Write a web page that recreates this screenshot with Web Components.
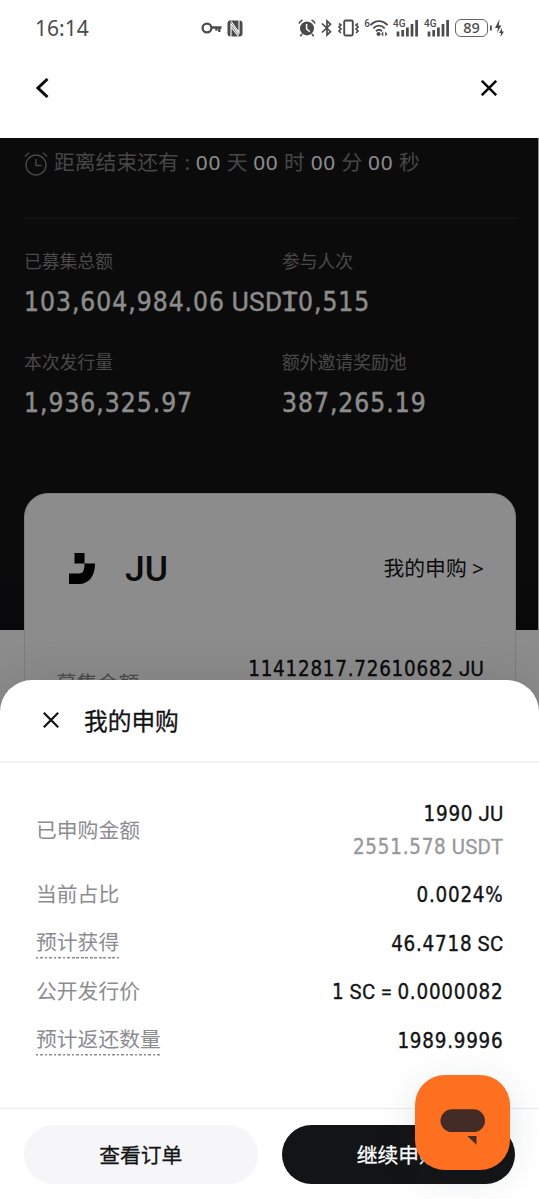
<!DOCTYPE html>
<html lang="zh-CN">
<head>
<meta charset="utf-8">
<title>我的申购</title>
<style>
    body {
        margin: 0;
        background: #fff;
        color: #131415;
        font-family: 'Noto Sans', 'Noto Sans CJK SC', sans-serif;
    }
</style>
</head>
<body>
<app-screen>
    <status-bar slot="top" time="16:14" battery="89"></status-bar>
    <nav-bar slot="top"></nav-bar>

    <launch-hero>
        <count-down></count-down>
        <hero-stat label="已募集总额"><amount-text value="103,604,984.06 USDT"></amount-text></hero-stat>
        <hero-stat label="参与人次"><amount-text value="10,515"></amount-text></hero-stat>
        <hero-stat label="本次发行量"><amount-text value="1,936,325.97"></amount-text></hero-stat>
        <hero-stat label="额外邀请奖励池"><amount-text value="387,265.19"></amount-text></hero-stat>
    </launch-hero>
    <token-card symbol="JU" action="我的申购 &gt;">
        <span slot="label">募集金额</span>
        <amount-text slot="value" value="11412817.72610682 JU"></amount-text>
    </token-card>

    <bottom-sheet slot="sheet" heading="我的申购">
        <info-row class="tall" label="已申购金额">
            <amount-text value="1990 JU"></amount-text>
            <amount-text class="muted" value="2551.578 USDT"></amount-text>
        </info-row>
        <info-row label="当前占比"><amount-text value="0.0024%"></amount-text></info-row>
        <info-row label="预计获得" hint><amount-text value="46.4718 SC"></amount-text></info-row>
        <info-row label="公开发行价"><amount-text value="1 SC = 0.0000082"></amount-text></info-row>
        <info-row label="预计返还数量" hint><amount-text value="1989.9996"></amount-text></info-row>
        <pill-button slot="actions">查看订单</pill-button>
        <pill-button slot="actions" primary>继续申购</pill-button>
    </bottom-sheet>
    <chat-bubble slot="sheet"></chat-bubble>
</app-screen>

<script>
class BaseElement extends HTMLElement {
    connectedCallback() {
        if (this.shadowRoot) return;
        this.attachShadow({ mode: 'open' });
        this.shadowRoot.innerHTML = this.render();
    }
    attr(name) {
        return (this.getAttribute(name) || '').replace(/</g, '&lt;').replace(/>/g, '&gt;');
    }
}

class AppScreen extends BaseElement {
    render() {
        return `
            <style>
                :host {
                    display: flex;
                    flex-direction: column;
                    position: relative;
                    height: 1199px;
                    overflow: hidden;
                }
                .page {
                    flex: 1;
                    position: relative;
                    overflow: hidden;
                    background: #fff;
                }
                .mask {
                    position: absolute;
                    inset: 0;
                    background: rgba(0, 0, 0, 0.45);
                }
            </style>
            <slot name="top"></slot>
            <div class="page">
                <slot></slot>
                <div class="mask"></div>
            </div>
            <slot name="sheet"></slot>
        `;
    }
}

class StatusBar extends BaseElement {
    render() {
        const signal = `
            <div class="signal"><b>4G</b><svg width="26" height="18" viewBox="0 0 26 18"><path d="M5 12.5V17.500M9.700 11V17.500M14.400 8.500V17.500M19 5V17.500M23.600 1V17.500" stroke-width="2.700"/></svg></div>
        `;
        return `
            <style>
                :host {
                    display: flex;
                    align-items: center;
                    height: 56px;
                    padding: 0 35px;
                    box-sizing: border-box;
                    color: #4b4b4b;
                }
                .time { font-size: 21px; width: 166px; }
                svg { display: block; fill: none; stroke: currentColor; }
                .solid { fill: currentColor; stroke: none; }
                .left { display: flex; gap: 5px; align-items: center; flex: 1; }
                .right { display: flex; align-items: center; }
                .net {
                    display: flex;
                    align-items: flex-start;
                    font: 500 10px/10px Roboto, sans-serif;
                }
                .signal { width: 31px; position: relative; height: 18px; }
                .signal b {
                    position: absolute;
                    left: 0;
                    top: 0;
                    font: 500 10px/9px Roboto, sans-serif;
                }
                .battery {
                    border: 1.5px solid #666;
                    border-radius: 6px;
                    box-sizing: border-box;
                    width: 33px;
                    height: 18px;
                    text-align: center;
                    font: 500 14.500px/15px 'Noto Sans', sans-serif;
                }
            </style>
            <span class="time">${this.attr('time')}</span>
            <div class="left">
                <svg width="21" height="14" viewBox="0 0 21 14"><circle cx="6" cy="7" r="4.4" stroke-width="2.3"/><path d="M10.5 6.5H20.500M18.3 6v5M15.4 6v3.7" stroke-width="2.3"/></svg>
                <svg width="16" height="17" viewBox="0 0 16 17"><path class="solid" d="M3.5.5h9A3 3 0 0 1 15.500 3.500v10a3 3 0 0 1-3 3h-9a3 3 0 0 1-3-3v-10a3 3 0 0 1 3-3z"/><path d="M4 17V4L11.800 14.500M12 0V12.500L4.200 1.500M4.500 7.500l7 9" stroke="#fff" stroke-width="1.100"/></svg>
            </div>
            <div class="right">
                <svg width="18" height="18" viewBox="0 0 18 18"><circle class="solid" cx="9" cy="9.400" r="7"/><path d="M1 4.600C1.500 3 2.800 1.700 4.500 1M17 4.600C16.500 3 15.200 1.700 13.500 1M4 15l-1.700 2.200M14 15l1.700 2.200" stroke-width="1.600"/><path d="M8.600 5v5l3.200 2.600" stroke="#fff" stroke-width="1.500"/></svg>
                <svg style="margin-left:5px" width="12" height="18" viewBox="0 0 12 18"><path d="M1 4.500l8.500 8.200L6 16V2l3.500 3.300L1 13.500" stroke-width="1.700"/></svg>
                <svg style="margin-left:5px" width="21" height="18" viewBox="0 0 21 18"><rect x="6.200" y="1.500" width="8.600" height="15" rx="1.500" stroke-width="1.900"/><path d="M1 4.500l2 1.500-2 2 2 2-2 2 2 2M20 4.500L18 6l2 2-2 2 2 2-2 2" stroke-width="1.600"/></svg>
                <div class="net" style="margin-left:5px">6
                    <svg width="18" height="18" viewBox="0 0 18 18"><path d="M.5 6.200c5-5.500 12-5.500 17 0M3.300 9.300c3.500-3.600 8-3.600 11.400 0M6 12.200c2-1.800 4-1.800 6 0" stroke-width="1.900"/><circle class="solid" cx="8.500" cy="15" r="2"/><path class="solid" d="M11 15l2.300-2.500v5zM17.500 15l-2.300-2.500v5z"/></svg>
                </div>
                <div style="display:flex;margin-left:5px">${signal}${signal}</div>
                <div class="battery">${this.attr('battery')}</div>
                <svg style="margin-left:2px" width="14" height="18" viewBox="0 0 14 18"><path class="solid" d="M0 6.500h1.800v5H0zM9.500 0L5 9H8l-1 5 4.500-7.500H8.800zM12 9l-3 5H11L10.500 18 14 12.500H12z"/></svg>
            </div>
        `;
    }
}

class NavBar extends BaseElement {
    render() {
        return `
            <style>
                :host {
                    display: flex;
                    justify-content: space-between;
                    align-items: center;
                    height: 82px;
                    padding: 0 42px 19px 36px;
                    box-sizing: border-box;
                }
                svg { display: block; fill: none; stroke: #0b0b0b; stroke-width: 2.500; }
            </style>
            <svg width="13" height="20" viewBox="0 0 13 20"><path d="M11.500 1L2 10l9.500 9" stroke-width="3"/></svg>
            <svg width="16" height="16" viewBox="0 0 16 16"><path d="M.8.800l14.400 14.400M15.200.800L.8 15.200"/></svg>
        `;
    }
}

class AmountText extends BaseElement {
    render() {
        const text = this.attr('value').replace(/[A-Z=]+/g, '<span>$&</span>');
        return `
            <style>
                :host {
                    display: block;
                    white-space: nowrap;
                    font: 400 1em/20px 'DejaVu Sans Condensed', 'DejaVu Sans', sans-serif;
                    font-stretch: semi-condensed;
                    font-size: 0.98em;
                    letter-spacing: 0.038em;
                    word-spacing: -0.07em;
                    -webkit-text-stroke: 0.35px currentColor;
                }
                span {
                    font-family: Roboto, sans-serif;
                    font-stretch: normal;
                    letter-spacing: 0.015em;
                    -webkit-text-stroke: 0.3px currentColor;
                }
            </style>
            ${text}
        `;
    }
}

class CountDown extends BaseElement {
    render() {
        const parts = ['天', '时', '分', '秒'].map(u => `<b>00</b> ${u}`).join(' ');
        return `
            <style>
                :host {
                    display: flex;
                    align-items: center;
                    gap: 6px;
                    grid-column: 1 / -1;
                    height: 81px;
                    padding-bottom: 33px;
                    box-sizing: border-box;
                    border-bottom: 2px solid #202122;
                    color: #818181;
                    font-size: 20.8px;
                }
                svg { fill: none; stroke: currentColor; stroke-width: 1.400; position: relative; top: 2px; }
                span { word-spacing: 0.300px; }
                b { font-weight: 400; color: #fff; letter-spacing: 0.7px; }
            </style>
            <svg width="24" height="25" viewBox="0 0 24 25"><circle cx="12" cy="14" r="10"/><path d="M12 8v6.500h5.500M.800 5.500L5 1.800M23.200 5.500L19 1.800"/></svg>
            <span>距离结束还有 : ${parts}</span>
        `;
    }
}

class LaunchHero extends BaseElement {
    render() {
        return `
            <style>
                :host {
                    display: grid;
                    grid-template-columns: 234px 234px;
                    column-gap: 24px;
                    align-content: start;
                    height: 492px;
                    margin-right: 1px;
                    padding: 0 22px 0 24px;
                    box-sizing: border-box;
                    background: linear-gradient(#151515 75%, #121216);
                }
            </style>
            <slot></slot>
        `;
    }
}

class HeroStat extends BaseElement {
    render() {
        return `
            <style>
                :host { display: block; height: 73px; padding-top: 28.500px; }
                .label { font-size: 17.8px; line-height: 26px; color: #858585; }
                .value { font-size: 26.700px; color: #fff; padding-top: 18px; }
            </style>
            <div class="label">${this.attr('label')}</div>
            <div class="value"><slot></slot></div>
        `;
    }
}

class TokenCard extends BaseElement {
    render() {
        return `
            <style>
                :host {
                    display: block;
                    position: relative;
                    margin: -137px 23px 0 24px;
                    height: 360px;
                    padding: 0 31px;
                    box-sizing: border-box;
                    border: 1px solid #e4e4e4;
                    border-radius: 24px;
                    background: #fff;
                    font-size: 20.800px;
                }
                .head { display: flex; align-items: center; height: 148px; }
                .action { padding-bottom: 2px; }
                svg { margin: 0 30px 0 13px; }
                .symbol { flex: 1; font: 500 35.500px/1 Roboto, sans-serif; padding-top: 3px; }
                .row { display: flex; justify-content: space-between; padding-top: 17px; }
                .label { color: #8b8b8b; line-height: 49px; }
            </style>
            <div class="head">
                <svg width="26" height="31" viewBox="0 0 26 31"><path d="M5.500 0h10v10.500H26C26 23 20 31 10 31H0V20.500h10c4 0 5.500-3 5.500-10h-10z"/></svg>
                <span class="symbol">${this.attr('symbol')}</span>
                <span class="action">${this.attr('action')}</span>
            </div>
            <div class="row"><div class="label"><slot name="label"></slot></div><div><slot name="value"></slot></div></div>
        `;
    }
}

class BottomSheet extends BaseElement {
    render() {
        return `
            <style>
                :host {
                    position: absolute;
                    left: 0;
                    right: 0;
                    bottom: 0;
                    height: 519px;
                    display: flex;
                    flex-direction: column;
                    background: #fff;
                    border-radius: 32px 32px 0 0;
                    box-shadow: 0 0 45px rgba(0, 0, 0, 0.12);
                }
                header {
                    display: flex;
                    align-items: center;
                    gap: 25px;
                    height: 83px;
                    padding: 0 0 2px 43px;
                    box-sizing: border-box;
                    border-bottom: 2px solid #f3f3f3;
                    font-size: 23.700px;
                }
                svg { fill: none; stroke: #131415; stroke-width: 2.200; }
                h2 { margin: 0; font-size: 1em; font-weight: 400; -webkit-text-stroke: 0.300px; }
                main { flex: 1; padding: 28px 35.500px 0 36px; }
                footer {
                    display: grid;
                    grid-template-columns: 1fr 1fr;
                    gap: 24px;
                    height: 91px;
                    padding: 16px 24px 15px;
                    box-sizing: border-box;
                    border-top: 1px solid #ebebeb;
                }
            </style>
            <header>
                <svg width="16" height="16" viewBox="0 0 16 16"><path d="M.8.800l14.400 14.400M15.200.800L.8 15.200"/></svg>
                <h2>${this.attr('heading')}</h2>
            </header>
            <main><slot></slot></main>
            <footer><slot name="actions"></slot></footer>
        `;
    }
}

class InfoRow extends BaseElement {
    render() {
        return `
            <style>
                :host {
                    display: flex;
                    justify-content: space-between;
                    align-items: center;
                    height: 48.500px;
                    font-size: 20.800px;
                }
                :host(.tall) { height: 80px; }
                .label { color: #8c8c90; line-height: 29px; margin-top: -2px; }
                :host([hint]) .label {
                    padding-bottom: 2px;
                    margin-top: -1px;
                    background: repeating-linear-gradient(90deg, #8c8c90 0 2.500px, transparent 2.500px 4.500px) bottom / 100% 1.500px no-repeat;
                }
                .values {
                    display: flex;
                    flex-direction: column;
                    align-items: flex-end;
                    gap: 13px;
                }
                :host(.tall) .values { margin-top: -2px; }
                ::slotted(.muted) { color: #98989a; }
            </style>
            <span class="label">${this.attr('label')}</span>
            <div class="values"><slot></slot></div>
        `;
    }
}

class PillButton extends BaseElement {
    render() {
        return `
            <style>
                :host {
                    display: flex;
                    align-items: center;
                    justify-content: center;
                    height: 59px;
                    border-radius: 30px;
                    background: #f6f6f9;
                    font-size: 20.800px;
                    line-height: 30px;
                    -webkit-text-stroke: 0.300px;
                }
                :host([primary]) { background: #131415; color: #fff; }
            </style>
            <slot></slot>
        `;
    }
}

class ChatBubble extends BaseElement {
    render() {
        return `
            <style>
                :host {
                    position: absolute;
                    right: 29px;
                    bottom: 29px;
                    width: 95.500px;
                    height: 95.500px;
                    border-radius: 30px;
                    background: #ff6f20;
                    box-shadow: 0 8px 36px rgba(20, 50, 60, 0.13);
                }
                svg { display: block; }
            </style>
            <svg width="96" height="96" viewBox="0 0 96 96" fill="#432c26"><rect x="25.500" y="34.300" width="44.500" height="22.800" rx="11.400"/><path d="M52.300 61h9.200v8.800z"/></svg>
        `;
    }
}

customElements.define('app-screen', AppScreen);
customElements.define('status-bar', StatusBar);
customElements.define('nav-bar', NavBar);
customElements.define('amount-text', AmountText);
customElements.define('count-down', CountDown);
customElements.define('launch-hero', LaunchHero);
customElements.define('hero-stat', HeroStat);
customElements.define('token-card', TokenCard);
customElements.define('bottom-sheet', BottomSheet);
customElements.define('info-row', InfoRow);
customElements.define('pill-button', PillButton);
customElements.define('chat-bubble', ChatBubble);
</script>
</body>
</html>
